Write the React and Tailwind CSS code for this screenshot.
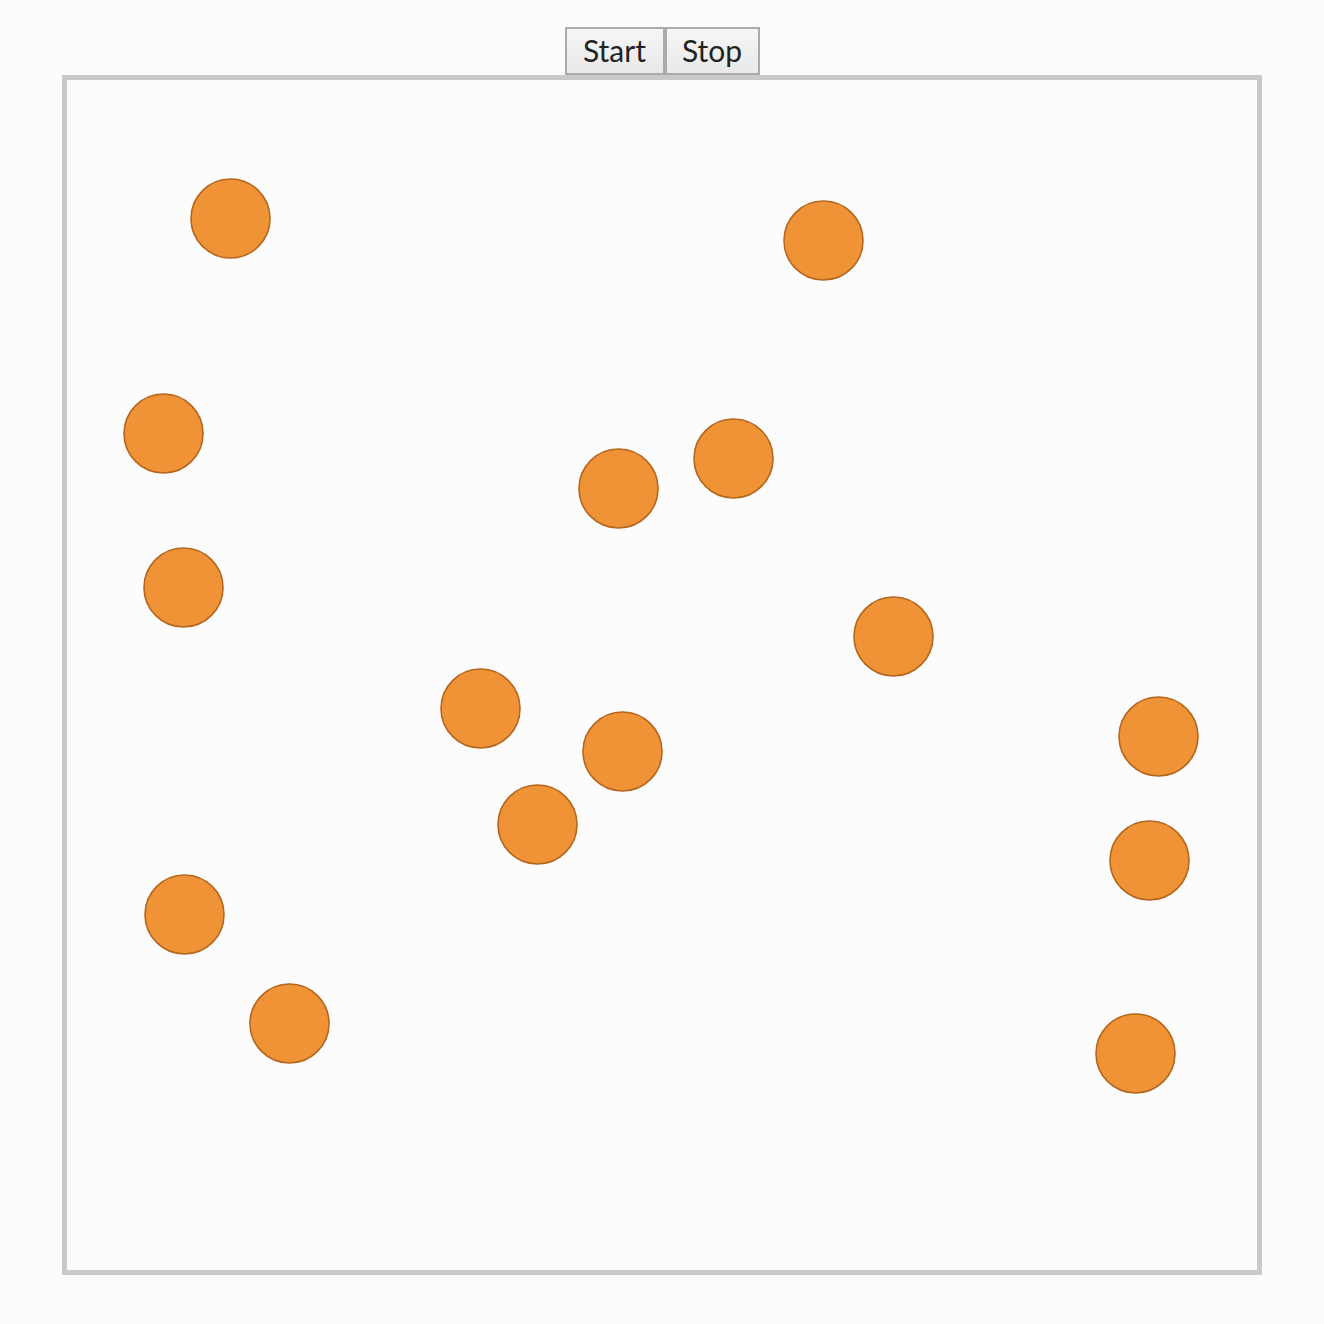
import React from "react";

const balls = [
  [230, 218], [823, 240], [163, 433], [618, 488], [733, 458], [183, 587],
  [893, 636], [480, 708], [622, 751], [537, 824], [1158, 736], [1149, 860],
  [184, 914], [289, 1023], [1135, 1053],
];

export default function App() {
  return (
    <div className="w-[1324px] h-[1324px] bg-[#fcfcfc] flex flex-col items-center pt-[27px]" style={{ fontFamily: "Lato, 'Open Sans', sans-serif" }}>
      <div className="flex">
        <button className="h-[48px] w-[100px] border-2 border-[#ababab] bg-gradient-to-b from-[#f6f6f6] to-[#e9e9e9] text-[30px] text-[#222] leading-none flex items-center justify-center pb-[2px]">Start</button>
        <button className="h-[48px] w-[95px] border-2 border-[#ababab] bg-gradient-to-b from-[#f6f6f6] to-[#e9e9e9] text-[30px] text-[#222] leading-none flex items-center justify-center pb-[2px]">Stop</button>
      </div>
      <div className="w-[1200px] h-[1200px] border-[5px] border-[#c9c9c9] bg-[#fcfcfc]">
        <svg width="1190" height="1190" viewBox="67 80 1190 1190" className="block">
          {balls.map(([x, y], i) => (
            <circle key={i} cx={x + 0.5} cy={y + 0.5} r="39.5" fill="#f09337" stroke="#b5661e" strokeWidth="1.6" />
          ))}
        </svg>
      </div>
    </div>
  );
}
